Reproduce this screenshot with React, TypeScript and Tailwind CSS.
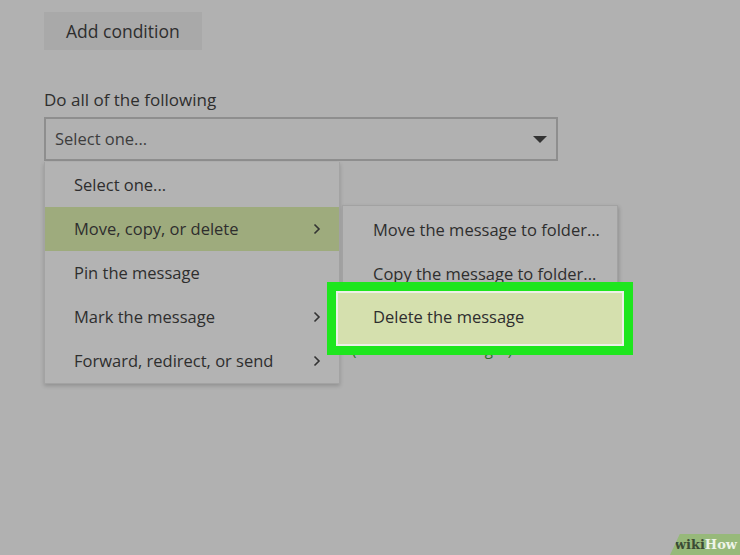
import React from 'react';

const font = { fontFamily: '"Open Sans", "Noto Sans", sans-serif' };

const Chevron: React.FC = () => (
  <svg width="8" height="12" viewBox="0 0 8 12" className="shrink-0">
    <path d="M1.5 1.5 L6 6 L1.5 10.5" fill="none" stroke="#333" strokeWidth="1.6" />
  </svg>
);

interface MenuItemProps {
  label: string;
  sub?: boolean;
  active?: boolean;
}

const MenuItem: React.FC<MenuItemProps> = ({ label, sub, active }) => (
  <div
    className={`h-[44px] flex items-center justify-between pl-[29px] pr-[18px] ${
      active ? 'bg-[#9eab7d]' : ''
    }`}
  >
    <span>{label}</span>
    {sub && <Chevron />}
  </div>
);

const App: React.FC = () => {
  const items: MenuItemProps[] = [
    { label: 'Select one...' },
    { label: 'Move, copy, or delete', sub: true, active: true },
    { label: 'Pin the message' },
    { label: 'Mark the message', sub: true },
    { label: 'Forward, redirect, or send', sub: true },
  ];

  return (
    <div
      className="relative w-[740px] h-[555px] overflow-hidden bg-[#b1b1b1] text-[#2e2e2e] text-[16.5px] pl-[44px] pt-[12px]"
      style={font}
    >
      {/* Add condition */}
      <div className="w-[158px] h-[38px] bg-[#a9a9a9] flex items-center pl-[22px] text-[17.5px]">Add condition</div>

      {/* Action select */}
      <div className="mt-[41px] leading-none h-[20px] text-[17px]">Do all of the following</div>
      <div className="mt-[6px] w-[514px] h-[44px] border-2 border-[#8e8e8e] flex items-center justify-between pl-[9px] pr-[8px] text-[#3d3d3d]">
        <span>Select one...</span>
        <svg width="16" height="9" viewBox="0 0 16 9">
          <path d="M1 1 H15 L8 8 Z" fill="#333" />
        </svg>
      </div>

      {/* Dropdown */}
      <div className="absolute left-[44px] top-[162px] w-[296px] bg-[#b3b3b3] border border-t-0 border-[#a3a3a3] shadow-[0_2px_4px_rgba(0,0,0,0.18)] pt-px">
        {items.map((it) => (
          <MenuItem key={it.label} {...it} />
        ))}
      </div>

      {/* Hidden text under submenu */}
      <div className="absolute left-[352px] top-[342px] text-[#2f6a2a] text-[15px] leading-none">
        (…when this message?)
      </div>

      {/* Submenu */}
      <div className="absolute left-[342px] top-[205px] w-[276px] h-[142px] bg-[#b4b4b4] border border-[#a2a2a2] shadow-[1px_2px_4px_rgba(0,0,0,0.2)] pt-[2px]">
        <div className="h-[44px] flex items-center pl-[30px]">Move the message to folder...</div>
        <div className="h-[44px] flex items-center pl-[30px]">Copy the message to folder...</div>
      </div>

      {/* Highlight */}
      <div className="absolute left-[327px] top-[282px] w-[306px] h-[73px] border-[9px] border-[#1ee61e]">
        <div className="w-full h-full bg-[#d5e0ae] border-2 border-[#eef0e8] flex items-center pl-[35px] pb-[2px]">
          Delete the message
        </div>
      </div>

      {/* Logo */}
      <div className="absolute right-0 bottom-0 w-[70px] h-[21px] bg-[#97b97a] [clip-path:polygon(14%_0,100%_0,100%_100%,0_100%)] flex items-center justify-end pr-[3px] font-bold text-[13px] leading-none" style={{ fontFamily: '"DejaVu Serif", serif' }}>
        <span className="text-[#3b4b34]">wiki</span>
        <span className="text-[#eef4e8]">How</span>
      </div>
    </div>
  );
};

export default App;
